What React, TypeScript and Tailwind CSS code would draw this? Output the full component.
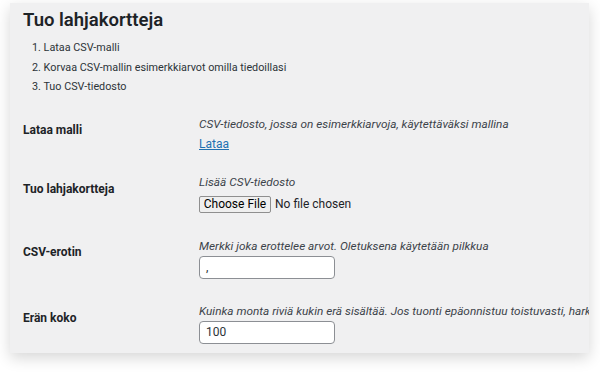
import React from "react";

const steps = [
  "Lataa CSV-malli",
  "Korvaa CSV-mallin esimerkkiarvot omilla tiedoillasi",
  "Tuo CSV-tiedosto",
];

function Row({
  label,
  labelTop,
  className,
  children,
}: {
  label: string;
  labelTop: string;
  className?: string;
  children: React.ReactNode;
}) {
  return (
    <div className={"flex " + (className ?? "")}>
      <div className={"w-[176px] shrink-0 text-[12px] leading-[16px] font-bold text-[#1d2327] " + labelTop}>
        {label}
      </div>
      <div className="min-w-0 flex-1 overflow-hidden whitespace-nowrap">{children}</div>
    </div>
  );
}

export default function App() {
  return (
    <div
      className="w-[600px] h-[372px] bg-white pt-[3px] pl-[10px] overflow-hidden"
      style={{ fontFamily: "Roboto, 'Noto Sans', sans-serif" }}
    >
      <div className="w-[579px] h-[350px] bg-[#f0f0f1] pl-[13px] pt-[3px] shadow-[0_5px_14px_rgba(0,0,0,0.16)] overflow-hidden">
        <h1 className="text-[18.5px] leading-[28px] font-semibold text-[#1d2327]">
          Tuo lahjakortteja
        </h1>
        <ol className="mt-[4px] pl-[9px] text-[10.8px] leading-[19.5px] text-[#2c3338]">
          {steps.map((s, i) => (
            <li key={s}>
              {i + 1}. {s}
            </li>
          ))}
        </ol>

        <Row label="Lataa malli" labelTop="pt-[6px]" className="mt-[19px]">
          <p className="text-[11.8px] leading-[16px] italic text-[#3c434a]">
            CSV-tiedosto, jossa on esimerkkiarvoja, käytettäväksi mallina
          </p>
          <a href="#" className="mt-[4px] block w-fit text-[12px] leading-[16px] text-[#2271b1] underline">
            Lataa
          </a>
        </Row>

        <Row label="Tuo lahjakortteja" labelTop="pt-[7px]" className="mt-[22px]">
          <p className="text-[11.8px] leading-[16px] italic text-[#3c434a]">Lisää CSV-tiedosto</p>
          <div className="mt-[6px] flex h-[17px] items-center">
            <span className="inline-flex h-[17px] w-[72px] items-center justify-center rounded-[2px] border border-[#8f8f8f] bg-[#efefef] text-[12px] leading-[15px] text-black">
              Choose File
            </span>
            <span className="ml-[4px] text-[12px] leading-[16px] text-[#1d2327]">No file chosen</span>
          </div>
        </Row>

        <Row label="CSV-erotin" labelTop="pt-[6px]" className="mt-[25px]">
          <p className="text-[11.8px] leading-[16px] italic text-[#3c434a]">
            Merkki joka erottelee arvot. Oletuksena käytetään pilkkua
          </p>
          <div className="mt-[2px] flex h-[23px] w-[136px] items-center rounded-[4px] border border-[#8c8f94] bg-white px-[6px] text-[12px] leading-[16px] text-[#2c3338]">
            ,
          </div>
        </Row>

        <Row label="Erän koko" labelTop="pt-[7px]" className="mt-[24px]">
          <p className="text-[11.8px] leading-[16px] italic text-[#3c434a]">
            Kuinka monta riviä kukin erä sisältää. Jos tuonti epäonnistuu toistuvasti, harkitse pienempää arvoa
          </p>
          <div className="mt-[2px] flex h-[23px] w-[136px] items-center rounded-[4px] border border-[#8c8f94] bg-white px-[6px] text-[12px] leading-[16px] text-[#2c3338]">
            100
          </div>
        </Row>
      </div>
    </div>
  );
}
